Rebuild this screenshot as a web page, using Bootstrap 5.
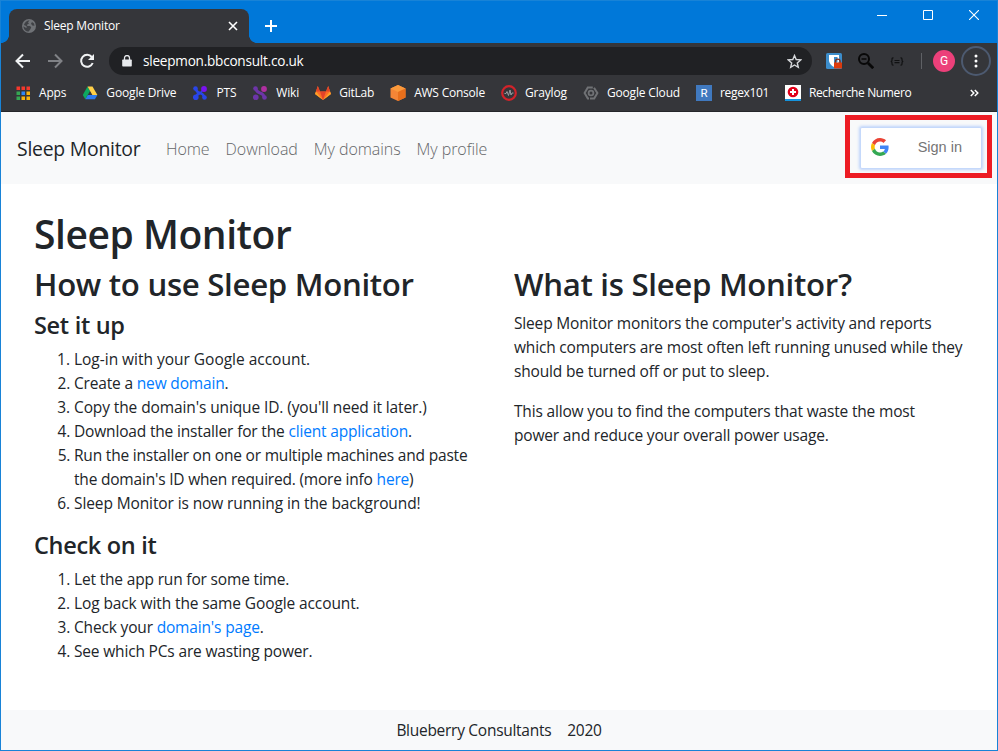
<!DOCTYPE html>
<html lang="en">
<head>
<meta charset="utf-8">
<title>Sleep Monitor</title>
<link href="https://cdn.jsdelivr.net/npm/bootstrap@5.3.0/dist/css/bootstrap.min.css" rel="stylesheet">
<style>
body{font-family:"Open Sans","Noto Sans",sans-serif;font-size:15.5px;line-height:24px;color:#212529;overflow:hidden}
svg{display:block;flex:none}
.window{width:998px;height:751px;border:1px solid #1883d7;overflow:hidden}

/* browser chrome */
.titlebar{height:42px;background:#0078d9;color:#fff}
.browser-tab{width:240px;height:34px;margin:8px 0 0 8px;padding:0 11px 0 13px;background:#35363a;border-radius:8px 8px 0 0;font-size:12px;letter-spacing:-.2px;position:relative}
.browser-tab::before,.browser-tab::after{content:"";position:absolute;bottom:0;width:8px;height:8px}
.browser-tab::before{left:-8px;background:radial-gradient(circle at 0 0,transparent 7.6px,#35363a 8.2px)}
.browser-tab::after{right:-8px;background:radial-gradient(circle at 100% 0,transparent 7.6px,#35363a 8.2px)}
.new-tab{margin:19px 0 0 16px}
.win-buttons{gap:36px;margin:9px 18px 0 auto}
.toolbar{height:36px;background:#35363a;color:#fff;padding-left:13px}
.nav-icons{gap:14px}
.address{width:703px;height:28px;border-radius:14px;background:#202124;font-size:13.6px;letter-spacing:-.24px;margin-left:13px;padding:0 10px 0 13px}
.address span{padding-left:11px}
.extensions{gap:16px;margin-left:14px}
.rule{width:1px;height:16px;background:#5f6165;margin-left:1px}
.avatar{width:22px;height:22px;background:#ec407a;font:12px Roboto,sans-serif;margin-left:-5px}
.menu-ring{width:30px;height:30px;border:2px solid #4d5a70;margin-left:-10px}
.bookmarks{height:33px;background:#35363a;color:#fff;font-size:12px;border-bottom:1px solid #25262a;gap:16px;padding:0 18px 5px 14px}
.bm{gap:8px;white-space:nowrap;letter-spacing:-.16px}
.bm-tight{letter-spacing:-.36px}
.bm-snug{letter-spacing:-.22px}

/* site navbar */
.site-nav{height:72px;padding:0 5px 0 16px}
.site-nav .navbar-brand{font-size:19.4px;letter-spacing:-.24px;margin-right:16px;padding-top:1px;width:125px;white-space:nowrap}
.site-nav .nav-link{font-size:16px;font-weight:300;letter-spacing:-.06px;color:#646668;padding-top:1px}
.callout{width:147px;height:63px;border:5px solid #ed1c24;margin:0 0 3px auto;padding:3px 0 0 11px}
.signin{width:120px;height:40px;background:#fff;border-radius:1px;box-shadow:0 0 3px 2px #bdd3fb;font:14.5px "Liberation Sans",Arial,sans-serif;color:#757575;padding:0 19px 2px 10px}

/* content */
.page{height:526px;padding:24px 33px 0}
.page a,.page a:hover{color:#007bff;text-decoration:none}
.page .row{--bs-gutter-x:30px}
h1,h2,h3{font-weight:600}
h1{font-size:39px;line-height:51px;letter-spacing:-.45px;margin-bottom:5px}
h2{font-size:31.2px;line-height:41.4px;letter-spacing:-.3px;margin-bottom:4px}
h3{font-size:23.5px;line-height:32px;letter-spacing:-.3px;margin-bottom:5.5px}
.page ol{padding-left:40px;margin-bottom:14.5px}
.page .about{padding-top:1.2px}
.page li,.page p{white-space:nowrap;letter-spacing:-.17px}
.page li.snug{letter-spacing:-.11px}
.page li.tight{letter-spacing:-.2px}
.page li.wide{letter-spacing:-.02px}
.foot{height:40px;gap:16px;letter-spacing:-.28px}
</style>
<script src="https://cdn.jsdelivr.net/npm/bootstrap@5.3.0/dist/js/bootstrap.bundle.min.js"></script>
</head>
<body>
<div class="window d-flex flex-column">
<header>
  <div class="titlebar d-flex align-items-start">
    <div class="browser-tab d-flex align-items-center">
      <svg width="14" height="14" viewBox="0 0 14 14"><circle cx="7" cy="7" r="7" fill="#6f7276"/><path d="M7.5 1.2 6 3.5l1 1-2 1.2.3 1.3H8l1.2 1.3L8.5 10l-1.8 2.6C3.8 12.6 1.4 10 1.4 7.200l2.400 1.500 1.200-.300-.800-1.400-2.300-.900C2.600 3.200 4.800 1.300 7.500 1.200zM10 3l2 1.600.5 2.200-2.200-.4L9 4.800z" fill="#3f4145"/></svg>
      <span class="ms-2 ps-0 flex-grow-1">Sleep Monitor</span>
      <svg width="10" height="10" viewBox="0 0 10 10" stroke="#fff" stroke-width="1.600"><path d="M1 1l8 8M9 1 1 9"/></svg>
    </div>
    <svg class="new-tab" width="12" height="12" viewBox="0 0 12 12" stroke="#fff" stroke-width="2"><path d="M6 0v12M0 6h12"/></svg>
    <div class="win-buttons d-flex">
      <svg width="10" height="10" viewBox="0 0 10 10"><path d="M0 5.500h10" stroke="#fff"/></svg>
      <svg width="10" height="10" viewBox="0 0 10 10"><path d="M.5.5h9v9h-9z" fill="none" stroke="#fff"/></svg>
      <svg width="10" height="10" viewBox="0 0 10 10"><path d="M0 0l10 10M10 0 0 10" stroke="#fff" stroke-width="1.100"/></svg>
    </div>
  </div>
  <div class="toolbar d-flex align-items-center">
    <div class="nav-icons d-flex">
      <svg width="18" height="18" viewBox="0 0 18 18" fill="none" stroke="#f1f3f4" stroke-width="2"><path d="M16 9H3M9 2.500 2.500 9 9 15.500"/></svg>
      <svg width="18" height="18" viewBox="0 0 18 18" fill="none" stroke="#808286" stroke-width="2"><path d="M2 9h13M9 2.500 15.500 9 9 15.500"/></svg>
      <svg width="18" height="18" viewBox="0 0 18 18" fill="none" stroke="#f1f3f4" stroke-width="2"><path d="M13.800 5A6 6 0 1 0 14.700 11"/><path d="M16 2v6h-6z" fill="#f1f3f4" stroke="none"/></svg>
    </div>
    <div class="address d-flex align-items-center">
      <svg width="10" height="12" viewBox="0 0 10 12"><path d="M1 4.500h8q.8 0 .8.800v5.400q0 .8-.8.800H1q-.8 0-.8-.8V5.300q0-.8.8-.8z" fill="#e8eaed"/><path d="M2.500 5V3a2.500 2.500 0 0 1 5 0v2" fill="none" stroke="#e8eaed" stroke-width="1.300"/></svg>
      <span class="flex-grow-1">sleepmon.bbconsult.co.uk</span>
      <svg width="15" height="15" viewBox="0 0 15 15"><path d="M7.500 1.500 9.200 5.500l4.500.4-3.400 3 1 4.400-3.800-2.300-3.800 2.300 1-4.400-3.400-3 4.500-.4z" fill="none" stroke="#d5d7da" stroke-width="1.400"/></svg>
    </div>
    <div class="extensions d-flex align-items-center">
      <svg width="16" height="16" viewBox="0 0 16 16"><rect width="16" height="16" rx="1.500" fill="#3c8dcb"/><path d="M3 2h10v6q-1 4-5 6-4-2-5-6z" fill="#fff"/><path d="M8 4h3.500v5L8 12z" fill="#3c8dcb"/><path d="M9.500 10V8.500a2.300 2.300 0 0 1 4.600 0V10" fill="none" stroke="#7b3020" stroke-width="1.300"/><rect x="8" y="9.500" width="8" height="6" fill="#dc3a0c"/></svg>
      <svg width="16" height="16" viewBox="0 0 16 16" fill="none" stroke="#080808"><circle cx="6" cy="6" r="5" stroke-width="2"/><path d="M3.500 6h5" stroke-width="1.500"/><path d="M10 10l5.200 5.200" stroke-width="2.800"/></svg>
      <svg width="14" height="9" viewBox="0 0 14 9" fill="none" stroke="#101112" stroke-width="1.200"><path d="M3.500.8H3q-1 0-1 1.200v1.300q0 1-1.200 1.200Q2 4.700 2 5.700V7q0 1.200 1 1.200h.5M10.500.8h.5q1 0 1 1.200v1.300q0 1 1.200 1.200Q12 4.700 12 5.700V7q0 1.200-1 1.200h-.5M4.500 3.500h5M4.500 5.700h5"/></svg>
      <div class="rule"></div>
      <div class="avatar rounded-circle d-flex align-items-center justify-content-center">G</div>
      <div class="menu-ring rounded-circle d-flex align-items-center justify-content-center"><svg width="4" height="14" viewBox="0 0 4 14" fill="#fff"><circle cx="2" cy="2" r="1.500"/><circle cx="2" cy="7" r="1.500"/><circle cx="2" cy="12" r="1.500"/></svg></div>
    </div>
  </div>
  <div class="bookmarks d-flex align-items-center">
    <div class="bm d-flex align-items-center"><svg width="16" height="16" viewBox="0 0 16 16"><path d="M1.500 1.500h3.500v3.500H1.500zM6.500 1.500H10v3.500H6.500zM11.500 1.500H15v3.500h-3.500z" fill="#f4382c"/><path d="M1.500 6.500h3.500V10H1.500zM1.500 11.500h3.500V15H1.500z" fill="#34a853"/><path d="M6.500 6.500H10V10H6.500z" fill="#2f86f6"/><path d="M6.500 11.500H10V15H6.500zM11.500 6.500H15V10h-3.500zM11.500 11.500H15V15h-3.500z" fill="#fbb40a"/></svg><span>Apps</span></div>
    <div class="bm d-flex align-items-center"><svg width="16" height="16" viewBox="0 0 16 16"><path d="M5.500 1.500 8 6 3.300 14.300.8 10z" fill="#0da960"/><path d="M5.500 1.500h5L15.400 10h-5z" fill="#ffcf48"/><path d="M5.800 10h9.600l-2.500 4.300H3.300z" fill="#2d7bf0"/></svg><span>Google Drive</span></div>
    <div class="bm d-flex align-items-center"><svg width="16" height="16" viewBox="0 0 16 16"><path d="M3.500 3.500q1.500 4 4.500 4.500t4.500 4.500M8 8q-3 1-4 4" stroke="#2945e8" stroke-width="2.600" fill="none"/><path d="M8.500 7.500 12 4" stroke="#2945e8" stroke-width="1.200"/><g fill="#2945e8"><circle cx="3.500" cy="3.500" r="2.300"/><circle cx="3.800" cy="12.200" r="2.800"/><circle cx="12.500" cy="12.500" r="2.300"/></g><circle cx="12" cy="4" r="2.900" fill="#7a12f0"/></svg><span>PTS</span></div>
    <div class="bm d-flex align-items-center"><svg width="16" height="16" viewBox="0 0 16 16"><path d="M3.500 3.500q1.500 4 4.500 4.500t4.500 4.500" stroke="#6c35a8" stroke-width="3" fill="none"/><g fill="#6c35a8"><circle cx="3.500" cy="3.500" r="2.300"/><circle cx="3.800" cy="12.200" r="2.800"/><circle cx="12.500" cy="12.500" r="2.300"/></g><circle cx="12" cy="4" r="2.900" fill="#b02fa0"/></svg><span>Wiki</span></div>
    <div class="bm d-flex align-items-center"><svg width="16" height="16" viewBox="0 0 16 16"><path d="M8 15 0 9l2.800-8L5 6.500h6L13.200 1 16 9z" fill="#fc6d26"/><path d="M8 15 5 6.500h6z" fill="#e24329"/><path d="M8 15 0 9l1-2.500zM8 15l8-6-1-2.500z" fill="#fca326"/><path d="M2.800 1 5 6.500H1zM13.200 1 11 6.500h4z" fill="#e24329"/></svg><span class="bm-snug">GitLab</span></div>
    <div class="bm d-flex align-items-center"><svg width="16" height="16" viewBox="0 0 16 16"><path d="M8 0l7.500 3.500v9L8 16 .5 12.500v-9z" fill="#f58536"/><path d="M8 0l7.500 3.500L8 7 .5 3.500z" fill="#fb9a3c"/><path d="M8 7l7.500-3.500v9L8 16z" fill="#e86f1c"/></svg><span class="bm-snug">AWS Console</span></div>
    <div class="bm d-flex align-items-center"><svg width="16" height="16" viewBox="0 0 16 16" fill="none"><circle cx="8" cy="8" r="6.800" stroke="#d2232a" stroke-width="2.200"/><path d="M3.500 8.500H5l1-2 1.500 4L9 5l1 5 1-2h1.500" stroke="#9a9da1"/></svg><span>Graylog</span></div>
    <div class="bm d-flex align-items-center"><svg width="16" height="16" viewBox="0 0 16 16" fill="none" stroke="#707275"><path d="M6 13.500H4.800L1.600 8l3.200-5.500h5M11 2.800 14.400 8l-3.200 5.500H7" stroke-width="2"/><circle cx="8" cy="8" r="2.400" stroke-width="1.800"/></svg><span>Google Cloud</span></div>
    <div class="bm d-flex align-items-center"><svg width="16" height="16" viewBox="0 0 16 16"><rect width="16" height="16" fill="#4079bf"/><text x="8" y="12" text-anchor="middle" font-family="Roboto,sans-serif" font-size="11.500" fill="#fff">R</text></svg><span class="bm-tight">regex101</span></div>
    <div class="bm d-flex align-items-center"><svg width="16" height="16" viewBox="0 0 16 16"><rect width="16" height="16" fill="#fff"/><rect y="14" width="16" height="2" fill="#1593dc"/><circle cx="8" cy="7" r="5.300" fill="#e2001a"/><path d="M8 4v6M5 7h6" stroke="#fff" stroke-width="2"/></svg><span class="bm-tight">Recherche Numero</span></div>
    <svg class="ms-auto" width="9" height="8" viewBox="0 0 9 8" fill="none" stroke="#fff" stroke-width="1.500"><path d="M.8 1l3 3-3 3M4.800 1l3 3-3 3"/></svg>
  </div>
</header>
<nav class="site-nav bg-light d-flex align-items-center">
  <a class="navbar-brand">Sleep Monitor</a>
  <a class="nav-link px-2">Home</a><a class="nav-link px-2">Download</a><a class="nav-link px-2">My domains</a><a class="nav-link px-2">My profile</a>
  <div class="callout d-flex align-items-center">
    <div class="signin d-flex align-items-center justify-content-between">
      <svg width="18" height="18" viewBox="0 0 48 48"><path fill="#EA4335" d="M24 9.500c3.540 0 6.710 1.220 9.210 3.600l6.850-6.850C35.900 2.380 30.470 0 24 0 14.620 0 6.510 5.380 2.560 13.220l7.980 6.190C12.430 13.720 17.740 9.500 24 9.500z"/><path fill="#4285F4" d="M46.980 24.550c0-1.570-.15-3.090-.38-4.550H24v9.020h12.940c-.58 2.960-2.260 5.480-4.780 7.180l7.730 6c4.510-4.180 7.090-10.360 7.090-17.650z"/><path fill="#FBBC05" d="M10.530 28.590c-.48-1.450-.76-2.990-.76-4.590s.27-3.140.76-4.590l-7.980-6.190C.92 16.460 0 20.120 0 24c0 3.880.92 7.540 2.560 10.780l7.970-6.190z"/><path fill="#34A853" d="M24 48c6.480 0 11.930-2.130 15.890-5.810l-7.730-6c-2.150 1.450-4.920 2.300-8.160 2.300-6.260 0-11.570-4.220-13.470-9.910l-7.980 6.190C6.510 42.620 14.620 48 24 48z"/></svg>
      <span>Sign in</span>
    </div>
  </div>
</nav>
<main class="page">
  <h1>Sleep Monitor</h1>
  <div class="row">
    <div class="col-6">
      <h2>How to use Sleep Monitor</h2>
      <h3>Set it up</h3>
      <ol>
        <li class="wide">Log-in with your Google account.</li>
        <li>Create a <a href="#">new domain</a>.</li>
        <li class="snug">Copy the domain's unique ID. (you'll need it later.)</li>
        <li>Download the installer for the <a href="#">client application</a>.</li>
        <li class="tight">Run the installer on one or multiple machines and paste<br>the domain's ID when required. (more info <a href="#">here</a>)</li>
        <li class="snug">Sleep Monitor is now running in the background!</li>
      </ol>
      <h3>Check on it</h3>
      <ol>
        <li>Let the app run for some time.</li>
        <li class="snug">Log back with the same Google account.</li>
        <li>Check your <a href="#">domain's page</a>.</li>
        <li>See which PCs are wasting power.</li>
      </ol>
    </div>
    <div class="col-6">
      <h2>What is Sleep Monitor?</h2>
      <div class="about">
        <p>Sleep Monitor monitors the computer's activity and reports<br>which computers are most often left running unused while they<br>should be turned off or put to sleep.</p>
        <p>This allow you to find the computers that waste the most<br>power and reduce your overall power usage.</p>
      </div>
    </div>
  </div>
</main>
<footer class="foot bg-light d-flex justify-content-center align-items-center"><span>Blueberry Consultants</span><span>2020</span></footer>
</div>
</body>
</html>
